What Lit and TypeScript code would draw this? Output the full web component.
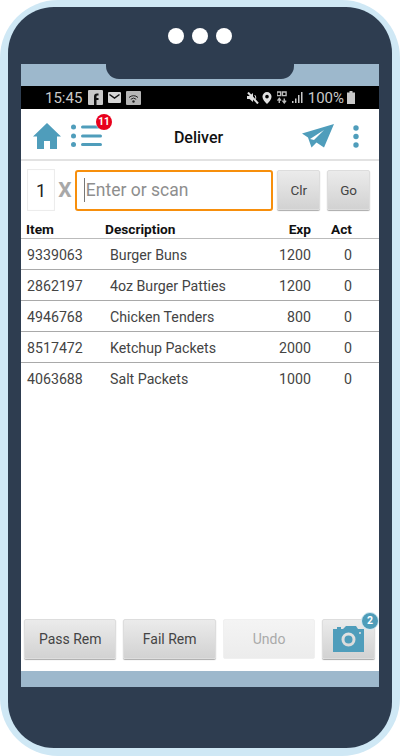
import { LitElement, html, css, svg } from "lit";
import { customElement } from "lit/decorators.js";

const rows = [
  ["9339063", "Burger Buns", "1200", "0"],
  ["2862197", "4oz Burger Patties", "1200", "0"],
  ["4946768", "Chicken Tenders", "800", "0"],
  ["8517472", "Ketchup Packets", "2000", "0"],
  ["4063688", "Salt Packets", "1000", "0"],
];

@customElement("app-root")
export class AppRoot extends LitElement {
  static styles = css`
    :host { display: block; width: 400px; height: 756px; background: #fff; font-family: Roboto, "Liberation Sans", sans-serif; overflow: hidden; }
    * { box-sizing: border-box; }
    .frame { width: 400px; height: 756px; background: #cfe8f5; border-radius: 58px; padding: 7px 8px 8px; }
    .bezel { height: 741px; background: #2e3d50; border-radius: 46px; padding: 0 13px 61px; display: flex; flex-direction: column; }
    .dots { height: 57px; flex: none; display: flex; justify-content: center; align-items: center; gap: 8px; padding-right: 1px; }
    .dots i { width: 16px; height: 16px; border-radius: 50%; background: #fff; display: block; }
    .screen { flex: 1; display: flex; flex-direction: column; min-height: 0; }
    .strip { height: 22px; flex: none; background: #9db8cc; display: flex; justify-content: center; }
    .notch { width: 188px; height: 15px; background: #2e3d50; border-radius: 0 0 13px 13px; }
    .status { height: 23px; flex: none; background: #000; color: #c9c9c9; display: flex; align-items: center; padding: 0 24px 0 24px; font-size: 15px; }
    .status .time { margin-right: 6px; }
    .status .spacer { flex: 1; }
    .status svg { display: block; }
    .status .pct { margin: 0 3px 0 5px; font-size: 15px; }
    .ml3 { margin-left: 3px; }
    .ml5 { margin-left: 5px; }
    .app { flex: 1; background: #fff; display: flex; flex-direction: column; min-height: 0; }
    .head { height: 52px; flex: none; display: flex; align-items: center; border-bottom: 2px solid #e2e2e2; padding: 4px 20px 0 12px; }
    .head .list { position: relative; margin-left: 10px; width: 32px; height: 24px; }
    .badge { position: absolute; left: 25px; top: -10px; width: 16px; height: 16px; border-radius: 50%; background: #e8001c; color: #fff; font-size: 10px; font-weight: 700; line-height: 16px; text-align: center; box-shadow: 0 0 2px #fff; }
    .title { flex: 1; text-align: center; font-size: 16px; font-weight: 500; color: #111; padding: 2px 8px 0 0; }
    .head svg { display: block; }
    .plane { margin-right: 18px; }
    .entry { display: flex; align-items: center; padding: 7px 9px 0 6px; height: 51px; flex: none; }
    .qty { width: 28px; height: 42px; border: 1px solid #ececec; box-shadow: inset 0 0 1px #eee; font-size: 18px; color: #222; display: flex; align-items: center; justify-content: center; }
    .x { width: 20px; text-align: center; font-size: 21px; font-weight: 700; color: #a8a8a8; }
    .input { width: 199px; height: 41px; border: 2px solid #f78f0c; border-radius: 3px; display: flex; align-items: center; padding-left: 7px; font-size: 17.5px; color: #8e8e8e; margin-right: -3px; }
    .caret { width: 1px; height: 24px; background: #777; margin-right: 1px; }
    .btn { display: flex; align-items: center; justify-content: center; background: linear-gradient(#ebebeb, #d2d2d2); border-radius: 2px; box-shadow: 0 1px 1px #aaa; color: #444; font-size: 14px; border: 1px solid #ddd; }
    .entry .btn { width: 43px; height: 40px; margin-left: 7px; font-size: 13.5px; }
    .table { flex: 1; display: flex; flex-direction: column; min-height: 0; }
    .row { display: grid; grid-template-columns: 79px 1fr 40px 68px; height: 31px; align-items: center; border-bottom: 1px solid #a9a9a9; padding: 1px 0 0 5px; font-size: 14.2px; color: #444; }
    .row:last-child { border-bottom: none; }
    .row.h { height: 27px; align-items: end; padding: 0 0 1px 5px; font-weight: 700; color: #111; font-size: 13.7px; border-bottom: 1px solid #bbb; }
    .row .d { padding-left: 5px; }
    .row.h .d { padding-left: 0; }
    .row .id { padding-left: 1px; }
    .row.h .id { padding-left: 0; }
    .row .n { text-align: right; }
    .row .a { text-align: right; padding-right: 27px; }
    .foot { flex: none; display: flex; gap: 7px; padding: 0 4px 12px 3px; align-items: stretch; }
    .foot .btn { width: 93px; height: 40px; font-size: 14px; }
    .foot .btn.off { background: linear-gradient(#f4f4f4, #ececec); color: #aaa; box-shadow: none; border-color: #f0f0f0; width: 93px; margin-right: -1px; }
    .foot .cam { position: relative; width: 53px; margin-left: 1px; }
    .cam .b2 { position: absolute; right: -5px; top: -8px; width: 18px; height: 18px; border-radius: 50%; background: #4f9db9; color: #fff; font-size: 10.5px; font-weight: 700; line-height: 16px; text-align: center; border: 1px solid #d9edf4; }
    .bottom { height: 16px; flex: none; background: #9db8cc; }
  `;

  private statusLeft() {
    return html`
      <svg width="15" height="15" viewBox="0 0 15 15"><rect width="15" height="15" rx="1" fill="#c9c9c9"/><path d="M6 15V6.500c0-2 1-3 3-3h1.500v2H9.500c-.8 0-1 .3-1 1V8h2v2h-2v5z" fill="#111"/></svg>
      <svg class="ml5" width="13" height="11" viewBox="0 0 13 11"><rect width="13" height="11" rx="1" fill="#d5d5d5"/><path d="M1.500 2.500 6.500 6l5-3.500" fill="none" stroke="#111" stroke-width="1.500"/></svg>
      <svg class="ml5" width="15" height="14" viewBox="0 0 15 14"><rect width="15" height="14" rx="1" fill="#b5b5b5"/><g fill="none" stroke="#222" stroke-width="1"><path d="M3 6.500a6.500 6.500 0 0 1 9 0"/><path d="M4.800 8.300a4 4 0 0 1 5.400 0"/></g><circle cx="7.500" cy="10.500" r="1.200" fill="#222"/></svg>
    `;
  }

  private statusRight() {
    return html`
      <svg width="12" height="12" viewBox="0 0 12 12"><path d="M0 4h2.500L6 1v9L2.500 7H0z" fill="#e0e0e0"/><path d="M7.500 3c1.500 1 1.500 3 .8 4.500" fill="none" stroke="#e0e0e0"/><path d="M1 .5l10 11" stroke="#e0e0e0" stroke-width="2"/></svg>
      <svg class="ml3" width="10" height="12" viewBox="0 0 11 13"><path fill-rule="evenodd" d="M5.500 0a5 5 0 0 1 5 5c0 3-3 6-5 8-2-2-5-5-5-8a5 5 0 0 1 5-5zm0 3a2 2 0 1 0 0 4 2 2 0 0 0 0-4z" fill="#e0e0e0"/></svg>
      <svg class="ml5" width="10" height="13" viewBox="0 0 11 14"><path d="M0 1h4v4H0zM6 1h4v4H6zM2.500 8v5M0.500 10.500l2 -2.500 2 2.500M8 8v5M6 10.500l2 2.500 2-2.500" fill="none" stroke="#bdbdbd" stroke-width="1.500"/></svg>
      <svg class="ml5" width="11" height="13" viewBox="0 0 11 13"><g fill="#c9c9c9"><rect x="0" y="10" width="1.500" height="2"/><rect x="3" y="7.500" width="1.500" height="4.500"/><rect x="6" y="4" width="1.500" height="8"/><rect x="9" y="1" width="1.500" height="11"/></g></svg>
      <span class="pct">100%</span>
      <svg width="8" height="13" viewBox="0 0 8 13"><path d="M2.500 0h3v1.500H8V13H0V1.500h2.500z" fill="#c9c9c9"/></svg>
    `;
  }

  render() {
    return html`
      <div class="frame"><div class="bezel">
        <div class="dots"><i></i><i></i><i></i></div>
        <div class="screen">
          <div class="strip"><div class="notch"></div></div>
          <div class="status">
            <span class="time">15:45</span>${this.statusLeft()}
            <span class="spacer"></span>${this.statusRight()}
          </div>
          <div class="app">
            <div class="head">
              <svg width="28" height="28" viewBox="0 0 28 28"><path d="M14 1 0 14.500h4V27h7v-8h6v8h7V14.500h4z" fill="#4f9dbb"/></svg>
              <div class="list">
                <svg width="32" height="24" viewBox="0 0 32 24">
                  ${svg`<g fill="#4f9dbb"><circle cx="2.500" cy="3" r="2.500"/><circle cx="2.500" cy="12" r="2.500"/><circle cx="2.500" cy="20.500" r="2.500"/><rect x="10" y="1.500" width="21" height="3" rx="1.500"/><rect x="10" y="10.500" width="21" height="3" rx="1.500"/><rect x="10" y="19" width="21" height="3" rx="1.500"/></g>`}
                </svg>
                <span class="badge">11</span>
              </div>
              <div class="title">Deliver</div>
              <svg class="plane" width="33" height="25" viewBox="0 0 33 25"><path d="M32 0 0 9.500l6 4 3.500 10 5-5 7.500 5z" fill="#4f9dbb"/><path d="M8 15l14-9-10 10z" fill="#fff"/></svg>
              <svg width="6" height="23" viewBox="0 0 6 23"><g fill="#4f9dbb"><circle cx="3" cy="3" r="2.700"/><circle cx="3" cy="11.500" r="2.700"/><circle cx="3" cy="20" r="2.700"/></g></svg>
            </div>
            <div class="entry">
              <div class="qty">1</div>
              <div class="x">X</div>
              <div class="input"><span class="caret"></span>Enter or scan</div>
              <div class="btn">Clr</div>
              <div class="btn">Go</div>
            </div>
            <div class="table">
              <div class="row h"><span class="id">Item</span><span class="d">Description</span><span class="n">Exp</span><span class="a">Act</span></div>
              ${rows.map((r) => html`<div class="row"><span class="id">${r[0]}</span><span class="d">${r[1]}</span><span class="n">${r[2]}</span><span class="a">${r[3]}</span></div>`)}
            </div>
            <div class="foot">
              <div class="btn">Pass Rem</div>
              <div class="btn">Fail Rem</div>
              <div class="btn off">Undo</div>
              <div class="btn cam">
                <svg width="31" height="26" viewBox="0 0 31 26"><path fill-rule="evenodd" d="M0 26V3h4V1h4v2h2l3-3h10l2 3h6v23zM15.500 6.500a7 7 0 1 0 0 14 7 7 0 0 0 0-14zm0 3a4 4 0 1 1 0 8 4 4 0 0 1 0-8zM27 6a1 1 0 1 0 0 2 1 1 0 0 0 0-2z" fill="#4f9dbb"/></svg>
                <span class="b2">2</span>
              </div>
            </div>
          </div>
          <div class="bottom"></div>
        </div>
      </div></div>
    `;
  }
}
